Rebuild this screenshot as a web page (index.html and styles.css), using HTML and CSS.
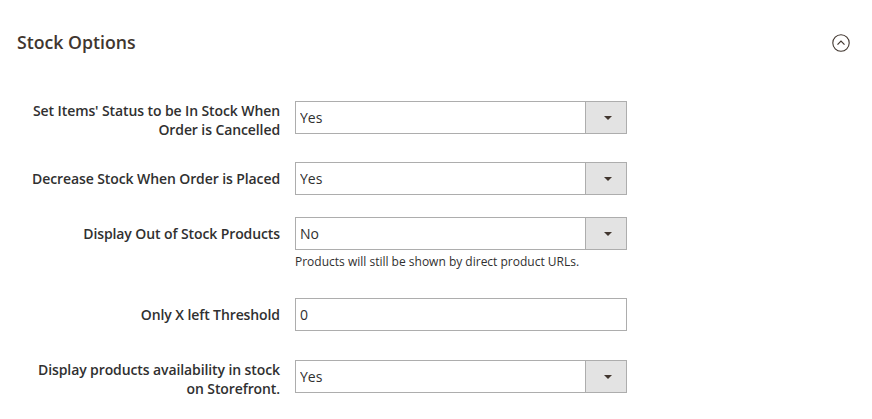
FILE: index.html
```html
<!DOCTYPE html>
<html lang="en">
<head>
    <meta charset="UTF-8">
    <meta name="viewport" content="width=device-width, initial-scale=1.0">
    <title>Stock Options</title>
    <link rel="stylesheet" href="styles.css">
</head>
<body>
    <div class="section">
        <div class="section-title">
            <h2>Stock Options</h2>
            <svg class="toggle" viewBox="0 0 18 18" width="18" height="18">
                <circle cx="9" cy="9" r="8.2" fill="none" stroke="#41362f" stroke-width="1.1"/>
                <path d="M5.5 10.6 L9 7.1 L12.5 10.6" fill="none" stroke="#41362f" stroke-width="1.2"/>
            </svg>
        </div>

        <div class="fields">
            <div class="field-row">
                <label class="field-label wrap" for="can-back-in-stock">Set Items' Status to be In Stock When Order is Cancelled</label>
                <div class="field-control">
                    <div class="select-wrap">
                        <select id="can-back-in-stock">
                            <option>Yes</option>
                            <option>No</option>
                        </select>
                        <span class="select-arrow"></span>
                    </div>
                </div>
            </div>

            <div class="field-row">
                <label class="field-label" for="can-subtract">Decrease Stock When Order is Placed</label>
                <div class="field-control">
                    <div class="select-wrap">
                        <select id="can-subtract">
                            <option>Yes</option>
                            <option>No</option>
                        </select>
                        <span class="select-arrow"></span>
                    </div>
                </div>
            </div>

            <div class="field-row">
                <label class="field-label" for="show-out-of-stock">Display Out of Stock Products</label>
                <div class="field-control">
                    <div class="select-wrap">
                        <select id="show-out-of-stock">
                            <option>No</option>
                            <option>Yes</option>
                        </select>
                        <span class="select-arrow"></span>
                    </div>
                    <p class="field-note">Products will still be shown by direct product URLs.</p>
                </div>
            </div>

            <div class="field-row threshold">
                <label class="field-label" for="stock-threshold">Only X left Threshold</label>
                <div class="field-control">
                    <input type="text" id="stock-threshold" value="0">
                </div>
            </div>

            <div class="field-row">
                <label class="field-label wrap" for="display-stock">Display products availability in stock on Storefront.</label>
                <div class="field-control">
                    <div class="select-wrap">
                        <select id="display-stock">
                            <option>Yes</option>
                            <option>No</option>
                        </select>
                        <span class="select-arrow"></span>
                    </div>
                </div>
            </div>
        </div>
    </div>
</body>
</html>
```

FILE: styles.css
```css
* {
    margin: 0;
    padding: 0;
    box-sizing: border-box;
}

body {
    font-family: "Open Sans", "Liberation Sans", sans-serif;
    color: #303030;
    background-color: #fff;
}

.section-title {
    display: flex;
    justify-content: space-between;
    padding: 29px 22px 0 17px;
}

.section-title h2 {
    font-size: 17.7px;
    font-weight: 600;
    line-height: 26px;
    color: #41362f;
}

.toggle {
    margin-top: 5px;
}

.fields {
    margin-top: 46px;
}

.field-row {
    display: flex;
    align-items: flex-start;
}

.field-row + .field-row {
    margin-top: 22px;
}

.field-row.threshold {
    padding-bottom: 7px;
}

.field-label {
    width: 256px;
    margin-left: 24px;
    margin-right: 15px;
    padding-top: 7px;
    text-align: right;
    font-size: 14px;
    font-weight: 600;
    letter-spacing: -0.1px;
    line-height: 19px;
    color: #303030;
}

.field-label.wrap {
    padding-top: 0;
    padding-bottom: 1px;
}

.field-control {
    width: 332px;
}

.select-wrap {
    position: relative;
}

select,
input {
    display: block;
    width: 100%;
    height: 33px;
    border: 1px solid #adadad;
    border-radius: 0;
    background-color: #fff;
    font-family: "Open Sans", "Liberation Sans", sans-serif;
    font-size: 14px;
    color: #303030;
    padding: 0 4px;
    outline: none;
}

select {
    -webkit-appearance: none;
    appearance: none;
    padding-right: 44px;
}

.select-arrow {
    position: absolute;
    top: 0;
    right: 0;
    width: 42px;
    height: 33px;
    border: 1px solid #adadad;
    background-color: #e3e3e3;
    pointer-events: none;
}

.select-arrow::after {
    content: "";
    position: absolute;
    top: 14px;
    left: 18px;
    border-left: 4px solid transparent;
    border-right: 4px solid transparent;
    border-top: 4px solid #41362f;
}

.field-note {
    margin: 3px 0 5px;
    font-size: 12px;
    line-height: 18px;
    color: #303030;
}
```
